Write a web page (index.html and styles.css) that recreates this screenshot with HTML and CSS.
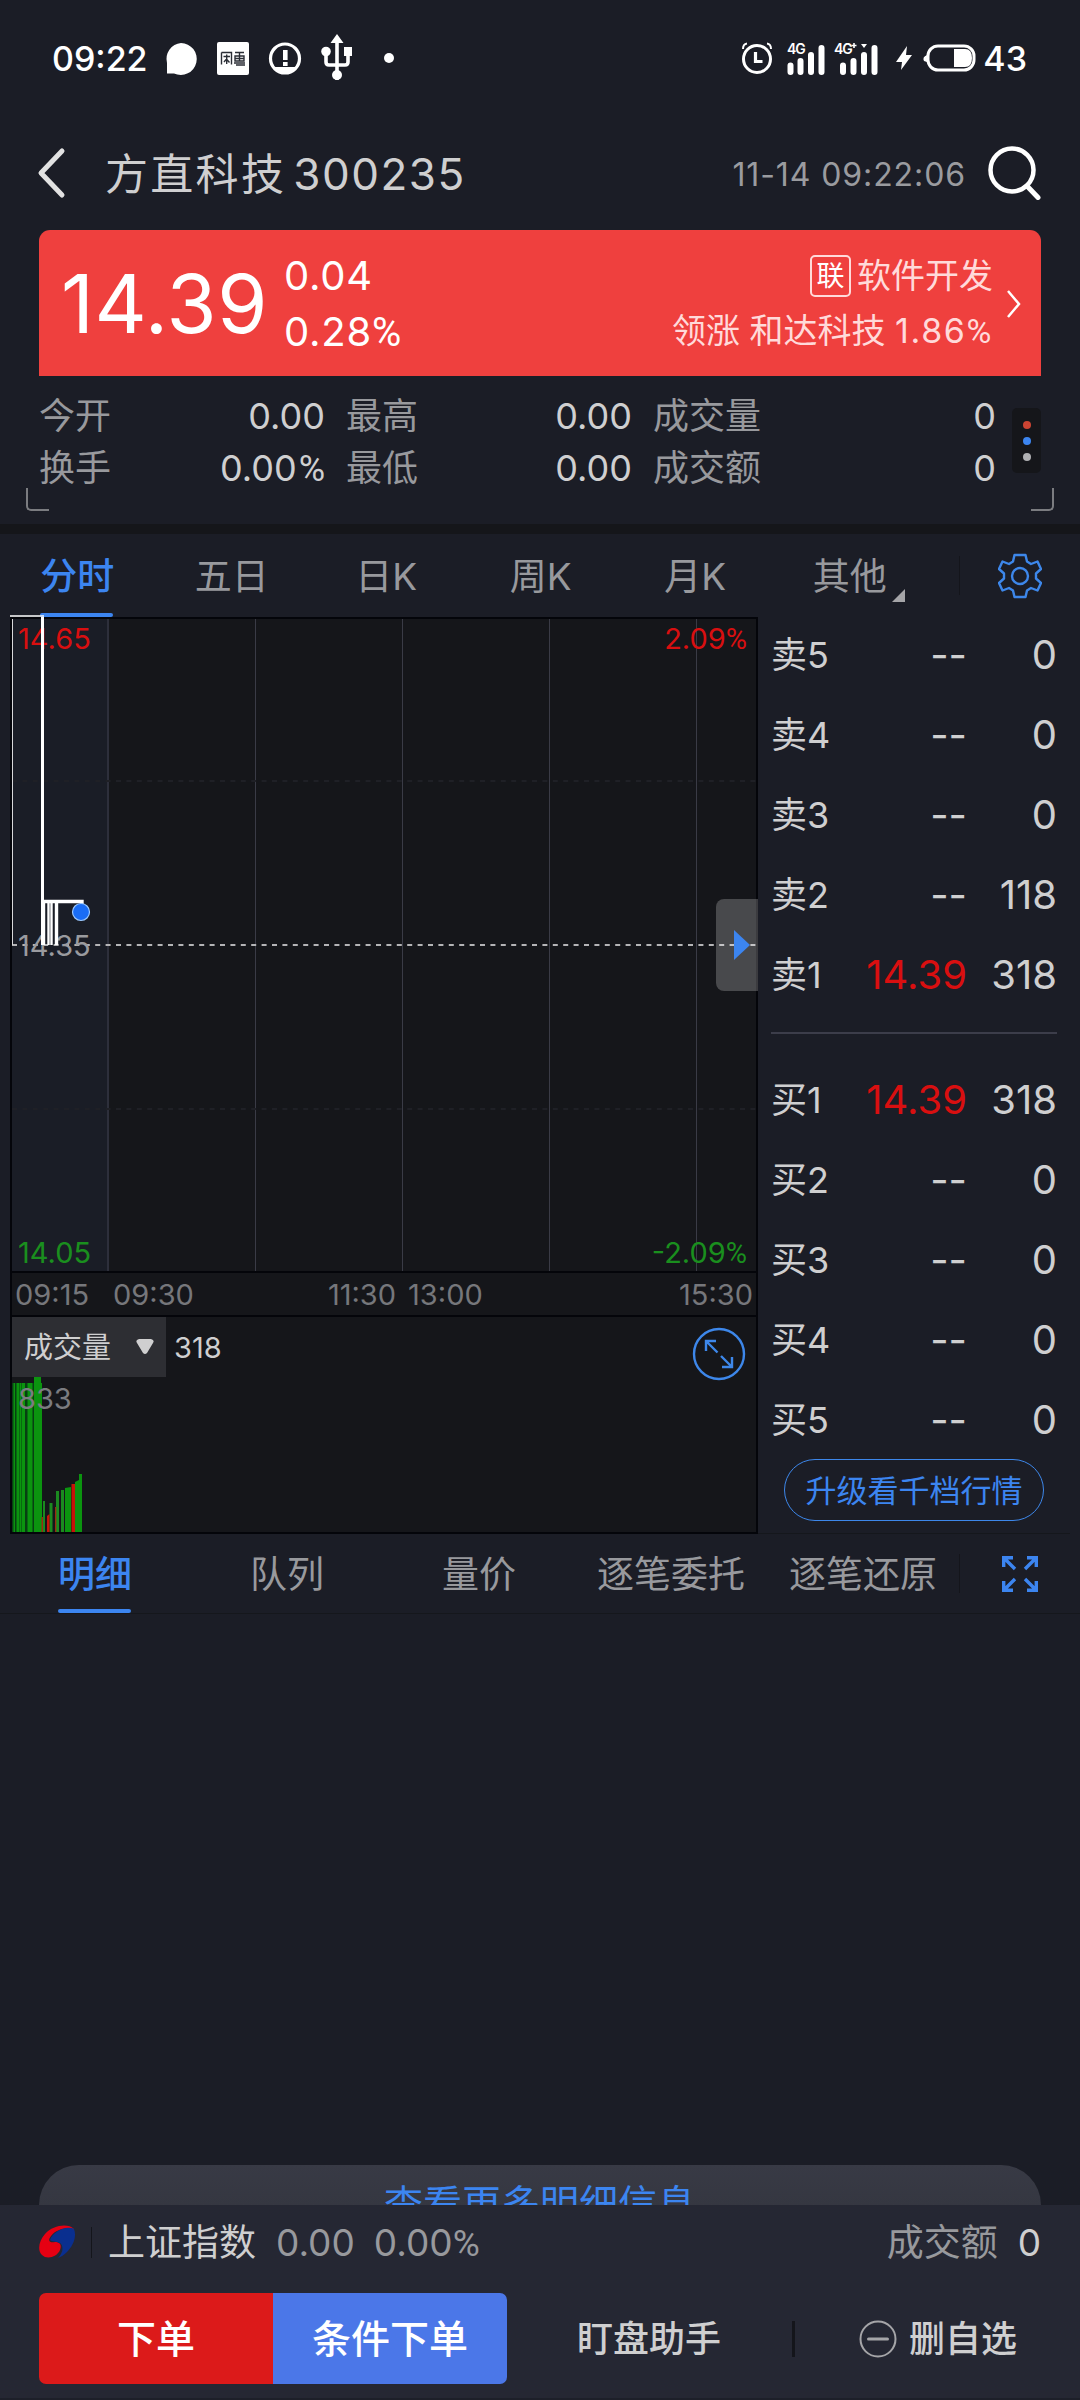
FILE: index.html
```html
<!DOCTYPE html>
<html lang="zh-CN">
<head>
	<meta charset="UTF-8">
	<title>方直科技 300235</title>
	<link rel="stylesheet" href="styles.css">
</head>
<body>
	<div class="status">
		<span class="time">09:22</span>
		<svg class="ico-notice" width="280" height="60" viewBox="0 0 280 60">
			<path d="M17 18a16 16 0 1 1-7 30.500H3V38A16 16 0 0 1 17 18z" transform="translate(2 -1)" fill="#fff"/>
			<rect x="55" y="16" width="32" height="33" rx="2" fill="#fff"/>
			<path d="M59.500 26.500v12M59.500 26.500h10v12M61.500 30.500h6.500M64.700 28.500v9.500M62 36l2.500-3 3 3.500M73 26.500h9M73 30h9v5h-9zM77.500 26.500v8.500M72 37h11M74 39h9M73 32.500h9" stroke="#2b2e36" stroke-width="1.400" fill="none"/>
			<circle cx="123" cy="32.500" r="14.500" fill="none" stroke="#fff" stroke-width="3.200"/>
			<path d="M111 41h24a15 15 0 0 1-12 7 15 15 0 0 1-12-7z" fill="#fff"/>
			<rect x="121" y="24" width="4.600" height="10" fill="#fff"/>
			<rect x="121" y="36" width="4.600" height="4" fill="#fff"/>
			<path d="M175 16v38M164 27v9q0 3 3 3h16q3 0 3-3v-8" fill="none" stroke="#fff" stroke-width="3.600"/>
			<path d="M175 8l6.500 9h-13zM182 21h8v9h-8z" fill="#fff"/>
			<circle cx="164" cy="25.500" r="4.800" fill="#fff"/>
			<circle cx="175" cy="49" r="5" fill="#fff"/>
			<circle cx="227" cy="32" r="5" fill="#fff"/>
		</svg>
		<svg class="ico-system" width="242" height="60" viewBox="0 0 242 60">
			<circle cx="17" cy="32" r="13.500" fill="none" stroke="#fff" stroke-width="3"/>
			<path d="M15.500 25v9.500h7" fill="none" stroke="#fff" stroke-width="3.200"/>
			<path d="M3 22q0-5 4-5.500M31 22q0-5-4-5.500" fill="none" stroke="#fff" stroke-width="2"/>
			<text x="47" y="27" class="net">4G</text>
			<path d="M50.500 38.500v6.500M60.500 34v11M71 28v17M81.500 21v24" stroke="#fff" stroke-width="6" stroke-linecap="round"/>
			<text x="94" y="27" class="net">4G</text>
			<path d="M111.500 18.500h5M114 16v5" stroke="#fff" stroke-width="1.600"/>
			<path d="M103 38.500v6.500M113.500 34v11M124 28v17M134.500 21v24" stroke="#fff" stroke-width="6" stroke-linecap="round"/>
			<path d="M121 17h6l-3 4z" fill="#fff"/>
			<path d="M167 19l-11 16h6l-1 8 11-15h-6z" fill="#fff"/>
			<rect x="188" y="19" width="46" height="24" rx="10" fill="none" stroke="#fff" stroke-width="3"/>
			<path d="M214 22h11q7 0 7 9t-7 9h-11zM187 28q-5 2-3 6l3 1z" fill="#fff"/>
		</svg>
		<span class="battery">43</span>
	</div>

	<div class="header">
		<svg class="back" width="30" height="52" viewBox="0 0 30 52"><path d="M25 4L4 26l21 22" fill="none" stroke="#e2e2e2" stroke-width="5" stroke-linecap="round" stroke-linejoin="round"/></svg>
		<div class="name">方直科技</div>
		<div class="code">300235</div>
		<div class="date">11-14 09:22:06</div>
		<svg class="search" width="54" height="54" viewBox="0 0 54 54"><circle cx="24" cy="24" r="21.500" fill="none" stroke="#fff" stroke-width="4.500"/><path d="M39 40l11 11.500" stroke="#fff" stroke-width="5" stroke-linecap="round"/></svg>
	</div>

	<div class="quote">
		<div class="price">14.39</div>
		<div class="change"><span>0.04</span><span>0.28<i class="pc">%</i></span></div>
		<div class="industry">
			<div class="line"><span class="tag">联</span>软件开发</div>
			<div class="line">领涨 和达科技 <span class="pct">1.86<i class="pc">%</i></span></div>
		</div>
		<svg width="16" height="28" viewBox="0 0 16 28"><path d="M2 1l11 13L2 27" fill="none" stroke="#fff" stroke-width="2.500"/></svg>
	</div>

	<div class="stats">
		<div class="grid">
			<div class="cell"><span>今开</span><b>0.00</b></div>
			<div class="cell"><span>最高</span><b>0.00</b></div>
			<div class="cell"><span>成交量</span><b>0</b></div>
			<div class="cell"><span>换手</span><b>0.00<i class="pc">%</i></b></div>
			<div class="cell"><span>最低</span><b>0.00</b></div>
			<div class="cell"><span>成交额</span><b>0</b></div>
		</div>
		<div class="more"><i class="red"></i><i class="blue"></i><i class="gray"></i></div>
		<div class="corner left"></div>
		<div class="corner right"></div>
	</div>

	<div class="tabs period">
		<div class="list">
			<div class="tab active">分时</div>
			<div class="tab">五日</div>
			<div class="tab">日K</div>
			<div class="tab">周K</div>
			<div class="tab">月K</div>
			<div class="tab other">其他</div>
		</div>
		<div class="tool">
			<svg width="44" height="46" viewBox="0 0 44 46" fill="none" stroke="#3d87ea" stroke-width="2.400" stroke-linejoin="round">
				<path d="M16.500 2h11l1.500 6.500 4 2.500 6.500-2.500 3.500 7.500-5 4.500v5l5 4.500-3.500 7.500-6.500-2.500-4 2.500-1.500 6.500h-11L15 37.500 11 35l-6.500 2.500L1 30l5-4.500v-5L1 16l3.500-7.500L11 11l4-2.500z"/>
				<circle cx="22" cy="23" r="8"/>
			</svg>
		</div>
	</div>

	<div class="market">
		<div class="charts">
			<div class="minute">
				<svg class="plot" width="748" height="656" viewBox="0 0 748 656">
					<rect x="2" y="2" width="95" height="652" fill="#1a1d26"/>
					<path d="M98 2v652" stroke="#2d2f3b" stroke-width="2"/>
					<path d="M245.500 2v652M392.500 2v652M539.500 2v652M686.500 2v652" stroke="#3a3b46"/>
					<path d="M2 164h744M2 492h744" stroke="#1f2026" stroke-width="2" stroke-dasharray="5 5.400"/>
					<path d="M2 328h744" stroke="#b4b4b6" stroke-width="2" stroke-dasharray="5 5.400"/>
				</svg>
				<span class="up tl">14.65</span>
				<span class="up tr">2.09<i class="pc">%</i></span>
				<span class="mid">14.35</span>
				<span class="down bl">14.05</span>
				<span class="down br">-2.09<i class="pc">%</i></span>
				<svg class="trend" width="748" height="656" viewBox="0 0 748 656">
					<path d="M0 -1h34" stroke="#fff" stroke-width="1.600"/>
					<path d="M2.500 2v326" stroke="#d8d8da"/>
					<path d="M32.500 0v328" stroke="#fff" stroke-width="3"/>
					<path d="M31 284.500h41v4M33.500 284v44M46.500 284v44" fill="none" stroke="#fff" stroke-width="3.400"/>
					<path d="M38.500 284v44M41.500 284v44" stroke="#fff" stroke-width="2.400"/>
					<circle cx="71" cy="295" r="8.500" fill="#1a6df5" stroke="#9ccaff" stroke-width="1.200"/>
				</svg>
				<div class="handle"><svg width="16" height="30" viewBox="0 0 16 30"><path d="M0 0l16 15L0 30z" fill="#3c85f0"/></svg></div>
			</div>
			<div class="axis">
				<span>09:15</span><span class="t2">09:30</span><span class="t3">11:30</span><span class="t4">13:00</span><span class="t5">15:30</span>
			</div>
			<div class="volume">
				<div class="bar"><div class="select">成交量<svg width="18" height="16" viewBox="0 0 18 16"><path d="M3 0h12q4 1 2 4l-6 10q-2 2-4 0L1 4Q-1 1 3 0z" fill="#cfcfd0"/></svg></div><span>318</span></div>
				<svg class="plot" width="748" height="217" viewBox="0 0 748 217">
					<path fill="#073f12" d="M2 68h22v149H2z"/>
					<path fill="#0b940f" d="M3.500 68h1.500v149H3.500zM6.500 68h3v149h-3zM10 68h1.500v149H10zM12 68h3v149h-3zM17.500 68h5v149h-5zM24 62h7v6h1v149h-8z"/>
					<path fill="#1b8a20" d="M33 186h2v31h-2zM39.500 188h3v29h-3zM46 176h3v41h-3zM51 175h3v42h-3z"/>
					<path fill="#0b940f" d="M55 173l6-1v45h-6zM65 167l4-2v-6h3v58h-7z"/>
					<path fill="#9a2a12" d="M31.500 202H33v15h-1.500zM45 192h1.300v25H45z"/>
					<path fill="#c91408" d="M37 201l2.500-2v18H37zM61.500 169H65v48h-3.500z"/>
				</svg>
				<span class="max">833</span>
				<svg class="expand" width="54" height="54" viewBox="0 0 54 54" fill="none" stroke="#3d87ea" stroke-width="2.400"><circle cx="27" cy="27" r="25"/><path d="M14 24V14h10M14 14l11.500 11.500M29 29l11 11M40 30v10H30"/></svg>
			</div>
		</div>
		<div class="book">
			<div class="row"><span>卖5</span><b>--</b><em>0</em></div>
			<div class="row"><span>卖4</span><b>--</b><em>0</em></div>
			<div class="row"><span>卖3</span><b>--</b><em>0</em></div>
			<div class="row"><span>卖2</span><b>--</b><em>118</em></div>
			<div class="row"><span>卖1</span><b class="up">14.39</b><em>318</em></div>
			<div class="split"></div>
			<div class="row"><span>买1</span><b class="up">14.39</b><em>318</em></div>
			<div class="row"><span>买2</span><b>--</b><em>0</em></div>
			<div class="row"><span>买3</span><b>--</b><em>0</em></div>
			<div class="row"><span>买4</span><b>--</b><em>0</em></div>
			<div class="row"><span>买5</span><b>--</b><em>0</em></div>
			<div class="upgrade">升级看千档行情</div>
		</div>
	</div>

	<div class="tabs detail">
		<div class="list">
			<div class="tab active">明细</div>
			<div class="tab">队列</div>
			<div class="tab">量价</div>
			<div class="tab">逐笔委托</div>
			<div class="tab">逐笔还原</div>
		</div>
		<div class="tool">
			<svg width="36" height="36" viewBox="0 0 36 36" fill="none" stroke="#3c85f0" stroke-width="3.400"><path d="M1.700 11V1.700H11M1.700 1.700L13 13M25 1.700h9.300V11M34.300 1.700L23 13M1.700 25v9.300H11M1.700 34.300L13 23M25 34.300h9.300V25M34.300 34.300L23 23"/></svg>
		</div>
	</div>

	<div class="content">
		<div class="load-more">查看更多明细信息</div>
	</div>

	<div class="footer">
		<div class="index">
			<svg width="36" height="36" viewBox="0 0 36 36">
				<path d="M35 5C29-1 14 1 6 10c-6 7-8 16-3 21 5 5 15 2 18-5 2-5 0-8-5-8-5 1-8-1-4-6C17 5 28 3 35 5z" fill="#e60012"/>
				<path d="M35 5c3 8-1 17-7 23-3 3-6 5-9 6 5-5 6-12 2-15-4-2-8-1-10-3 3-8 15-15 24-11z" fill="#0a2f8f"/>
			</svg>
			<i class="sep"></i>
			<span class="idx">上证指数</span>
			<span class="num">0.00</span>
			<span class="num">0.00<i class="pc">%</i></span>
			<span class="label">成交额</span>
			<span class="val">0</span>
		</div>
		<div class="actions">
			<div class="btn order">下单</div>
			<div class="btn cond">条件下单</div>
			<div class="link">盯盘助手</div>
			<i class="sep"></i>
			<div class="link remove"><svg width="38" height="38" viewBox="0 0 38 38" fill="none" stroke="#a5a5a8"><circle cx="19" cy="19" r="17.500" stroke-width="2"/><path d="M9.500 19h19" stroke-width="3" stroke-linecap="round"/></svg>删自选</div>
		</div>
	</div>
</body>
</html>
```
FILE: styles.css
```css
* {
	box-sizing: border-box;
}
body {
	margin: 0;
	width: 1080px;
	height: 2400px;
	overflow: hidden;
	background: #1b1d26;
	color: #cfcfd0;
	font-family: Inter, "Noto Sans CJK SC", sans-serif;
	line-height: 1;
	display: flex;
	flex-direction: column;
}
svg {
	display: block;
	flex: none;
}
b, em, i {
	font-weight: normal;
	font-style: normal;
}
.pc {
	font-family: Roboto, sans-serif;
	line-height: 0;
}
.up {
	color: #d90f10;
}
.down {
	color: #1a8f1e;
}

.status {
	height: 117px;
	padding: 0 53px 0 52px;
	display: flex;
	align-items: center;
	color: #fff;
	font-size: 34px;
	font-weight: 500;
}
.status .time {
	width: 95px;
	white-space: nowrap;
}
.status .ico-notice {
	margin-left: 15px;
	margin-top: -6px;
}
.status .ico-system {
	margin-left: auto;
	margin-right: 1px;
	margin-top: -4px;
}
.net {
	font-size: 14px;
	font-weight: 600;
	letter-spacing: -1px;
	fill: #fff;
}

.header {
	height: 113px;
	padding: 0 38px 0 37px;
	display: flex;
	align-items: center;
}
.header .back, .header .search {
	margin-top: -2px;
}
.header .name {
	margin-left: 38px;
	padding-top: 1px;
	font-size: 43px;
	letter-spacing: 2.300px;
}
.header .code {
	margin-left: 7px;
	padding-top: 1px;
	font-size: 44px;
	letter-spacing: 1.500px;
}
.header .date {
	margin-left: auto;
	margin-right: 22px;
	padding-top: 3px;
	font-size: 32px;
	color: #9a9b9f;
	letter-spacing: .900px;
}

.quote {
	height: 146px;
	margin: 0 39px;
	padding: 1px 19px 0 22px;
	background: #ef403e;
	border-radius: 11px 11px 0 0;
	color: #fff;
	display: flex;
	align-items: center;
}
.quote .price {
	font-size: 81px;
	letter-spacing: .600px;
	padding-top: 2px;
}
.quote .change {
	margin-left: 16px;
	padding-top: 1px;
	display: flex;
	flex-direction: column;
	gap: 16px;
	font-size: 40px;
	letter-spacing: .800px;
}
.quote .industry {
	margin-left: auto;
	margin-right: 13px;
	font-size: 34px;
	color: #ffdada;
}
.quote .line {
	height: 55px;
	display: flex;
	align-items: center;
	justify-content: flex-end;
	white-space: pre;
}
.quote .tag {
	width: 41px;
	height: 42px;
	margin-right: 6px;
	border: 2px solid #ffdada;
	border-radius: 5px;
	font-size: 28px;
	line-height: 38px;
	text-align: center;
	color: #fff;
}
.quote .pct {
	letter-spacing: 1.600px;
}

.stats {
	position: relative;
	height: 158px;
	border-bottom: 10px solid #15161a;
	padding: 14px 39px 0;
	display: flex;
	justify-content: space-between;
}
.stats .grid {
	display: grid;
	grid-template-columns: 286px 286px 343px;
	grid-auto-rows: 52px;
	column-gap: 21px;
}
.stats .cell {
	display: flex;
	align-items: center;
	justify-content: space-between;
	font-size: 36px;
	color: #98999d;
}
.stats .cell b {
	color: #cfcfd0;
}
.stats .cell .pc {
	margin-left: 2px;
}
.stats .more {
	width: 29px;
	height: 65px;
	margin-top: 18px;
	border-radius: 5px;
	background: #15161a;
	display: flex;
	flex-direction: column;
	align-items: center;
	justify-content: center;
	gap: 8px;
}
.more i {
	width: 8px;
	height: 8px;
	border-radius: 50%;
}
.more .red {
	background: #cc4433;
}
.more .blue {
	background: #3c85f0;
}
.more .gray {
	background: #b0b0b3;
}
.corner {
	position: absolute;
	bottom: 13px;
	width: 23px;
	height: 23px;
	border-bottom: 2px solid #7b7c80;
}
.corner.left {
	left: 26px;
	border-left: 2px solid #7b7c80;
	border-bottom-left-radius: 5px;
}
.corner.right {
	right: 26px;
	border-right: 2px solid #7b7c80;
	border-bottom-right-radius: 5px;
}

.tabs {
	display: flex;
	font-size: 37px;
	color: #98999d;
}
.tabs .list {
	display: flex;
}
.tabs .tab {
	position: relative;
	flex: 1;
	padding-top: 2px;
	display: flex;
	align-items: center;
	justify-content: center;
}
.tabs .active {
	color: #3c85f0;
	font-weight: 500;
}
.tabs .active::after {
	content: '';
	position: absolute;
	left: 50%;
	bottom: 0;
	width: 73px;
	height: 4px;
	margin-left: -37px;
	border-radius: 2px;
	background: #3c85f0;
}
.tabs .tool {
	flex: 1;
	display: flex;
	align-items: center;
	justify-content: center;
	background: linear-gradient(#14151b, #14151b) left center / 1px 39px no-repeat;
}
.period {
	height: 83px;
}
.period .list {
	width: 927px;
	margin-right: 32px;
}
.period .other::after {
	content: '';
	position: absolute;
	right: 22px;
	bottom: 15px;
	border-left: 13px solid transparent;
	border-bottom: 13px solid #a5a5a8;
}
.detail {
	height: 80px;
	border-bottom: 1px solid #15171c;
}
.detail .list {
	width: 960px;
	margin-left: -1px;
}

.market {
	height: 917px;
	display: flex;
}
.charts {
	width: 748px;
	margin-left: 10px;
	background: #15161a;
	font-size: 29px;
}
.minute {
	position: relative;
	height: 656px;
	border: 2px solid #04050a;
}
.minute .plot, .minute .trend {
	position: absolute;
	left: -2px;
	top: -2px;
	overflow: visible;
}
.minute span {
	position: absolute;
}
.minute .tl {
	left: 6px;
	top: 5px;
}
.minute .tr {
	right: 9px;
	top: 5px;
}
.minute .mid {
	left: 6px;
	top: 312px;
	color: #9a9b9f;
}
.minute .bl {
	left: 6px;
	bottom: 4px;
}
.minute .br {
	right: 9px;
	bottom: 4px;
}
.handle {
	position: absolute;
	right: -2px;
	top: 280px;
	width: 42px;
	height: 92px;
	border-radius: 8px 0 0 8px;
	background: rgba(255, 255, 255, .22);
	display: flex;
	align-items: center;
	padding-left: 18px;
}
.axis {
	height: 42px;
	padding: 0 3px;
	border: solid #04050a;
	border-width: 0 2px;
	color: #76777b;
	display: flex;
	align-items: center;
}
.axis .t2 {
	margin-left: 24px;
}
.axis .t3 {
	margin-left: 134px;
}
.axis .t4 {
	margin-left: 12px;
}
.axis .t5 {
	margin-left: auto;
}
.volume {
	position: relative;
	height: 219px;
	border: 2px solid #04050a;
}
.volume .bar {
	display: flex;
	align-items: center;
	gap: 8px;
}
.volume .select {
	width: 154px;
	height: 60px;
	padding: 0 12px;
	background: #2d2e33;
	display: flex;
	align-items: center;
	justify-content: space-between;
}
.volume .plot {
	position: absolute;
	left: -2px;
	top: -2px;
}
.volume .max {
	position: absolute;
	left: 6px;
	top: 67px;
	color: #7b7c80;
}
.volume .expand {
	position: absolute;
	right: 10px;
	top: 10px;
}

.book {
	flex: 1;
	border-bottom: 1px solid #15171c;
	margin-right: 10px;
	padding-right: 13px;
	padding-left: 13px;
}
.book .row {
	height: 80px;
	margin-top: -2px;
	margin-bottom: 2px;
	display: flex;
	align-items: center;
	font-size: 40px;
}
.row span {
	width: 60px;
	font-size: 36px;
}
.row b {
	width: 136px;
	text-align: right;
}
.row em {
	flex: 1;
	text-align: right;
}
.book .split {
	height: 2px;
	margin: 17px 0 28px;
	background: #3c3d4a;
}
.book .upgrade {
	width: 260px;
	height: 62px;
	margin: -3px 0 0 13px;
	border: 1px solid #3d87ea;
	border-radius: 31px;
	color: #3c85f0;
	font-size: 31px;
	display: flex;
	align-items: center;
	justify-content: center;
}

.content {
	flex: 1;
	padding: 0 39px;
	overflow: hidden;
	display: flex;
	align-items: flex-end;
}
.load-more {
	flex: 1;
	height: 80px;
	margin-bottom: -40px;
	padding-top: 19px;
	border-radius: 40px;
	background: linear-gradient(#383a45, #353741 50%);
	color: #3c85f0;
	font-size: 39px;
	text-align: center;
}

.footer {
	height: 195px;
	background: #252733;
	border-bottom: 2px solid #1d1f29;
	padding: 0 39px;
}
.index {
	height: 74px;
	display: flex;
	align-items: center;
	font-size: 37px;
}
.index .sep {
	width: 1px;
	height: 31px;
	margin: 0 16px;
	background: #14151b;
}
.index .num {
	margin-left: 20px;
	color: #98999d;
}
.index .num + .num {
	margin-left: 19px;
}
.index .label {
	margin-left: auto;
	margin-right: 20px;
	color: #98999d;
}
.actions {
	height: 91px;
	margin-top: 14px;
	display: flex;
	align-items: center;
}
.actions .btn {
	width: 234px;
	height: 91px;
	line-height: 91px;
	text-align: center;
	font-size: 39px;
	font-weight: 500;
	color: #fff;
}
.actions .order {
	background: #dc1a1a;
	border-radius: 7px 0 0 7px;
}
.actions .cond {
	background: #4b77e8;
	border-radius: 0 7px 7px 0;
}
.actions .link {
	display: flex;
	align-items: center;
	gap: 12px;
	margin-left: 70px;
	padding-top: 1px;
	font-size: 36px;
	font-weight: 500;
}
.actions .sep {
	width: 3px;
	height: 36px;
	margin-left: 71px;
	background: #14151b;
}
.actions .remove {
	margin-left: auto;
	margin-right: 24px;
}
```
